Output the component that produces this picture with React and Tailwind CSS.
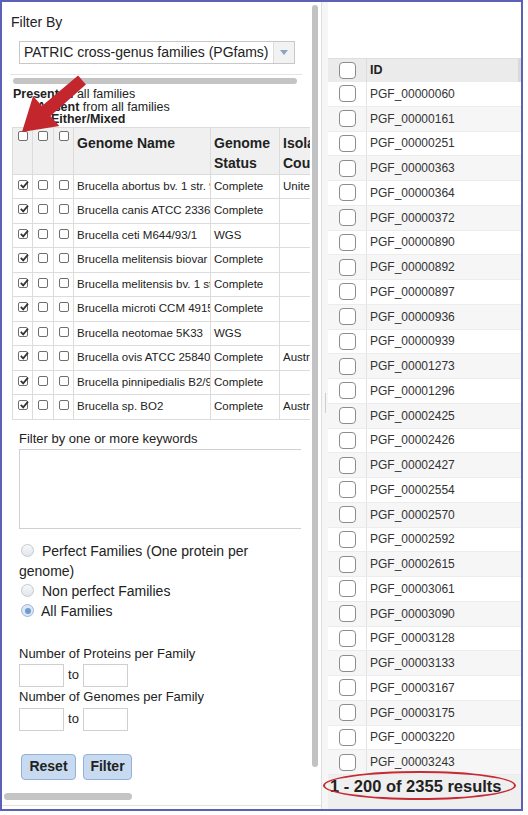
import React from 'react';

const genomes = [
  ['Brucella abortus bv. 1 str. 9-941', 'Complete', 'United States'],
  ['Brucella canis ATCC 23365', 'Complete', ''],
  ['Brucella ceti M644/93/1', 'WGS', ''],
  ['Brucella melitensis biovar Abortus 2308', 'Complete', ''],
  ['Brucella melitensis bv. 1 str. 16M', 'Complete', ''],
  ['Brucella microti CCM 4915', 'Complete', ''],
  ['Brucella neotomae 5K33', 'WGS', ''],
  ['Brucella ovis ATCC 25840', 'Complete', 'Australia'],
  ['Brucella pinnipedialis B2/94', 'Complete', ''],
  ['Brucella sp. BO2', 'Complete', 'Australia'],
];

const families = [
  '00000060', '00000161', '00000251', '00000363', '00000364', '00000372', '00000890',
  '00000892', '00000897', '00000936', '00000939', '00001273', '00001296', '00002425',
  '00002426', '00002427', '00002554', '00002570', '00002592', '00002615', '00003061',
  '00003090', '00003128', '00003133', '00003167', '00003175', '00003220', '00003243',
];

function TinyBox({ checked }) {
  return (
    <span className="relative inline-block w-[10px] h-[10px] border border-[#6f6f6f] rounded-[2px] bg-white align-top">
      {checked && (
        <svg viewBox="0 0 10 10" className="absolute left-[0px] top-[-1px] w-[10px] h-[10px]">
          <path d="M1.8 4.8 L4.2 7.4 L9 1.6" stroke="#333" strokeWidth="1.7" fill="none" />
        </svg>
      )}
    </span>
  );
}

function Radio({ on }) {
  return (
    <span
      className={`inline-flex items-center justify-center w-[13px] h-[13px] rounded-full border ${
        on ? 'border-[#9db6d6] bg-[#dbe7f4]' : 'border-[#c3c9d2] bg-gradient-to-b from-[#f7f8fa] to-[#e1e5ea]'
      }`}
    >
      {on && <span className="w-[6px] h-[6px] rounded-full bg-[#6f9ccf]" />}
    </span>
  );
}

function RowBox() {
  return <span className="block w-[17px] h-[17px] border-[1.5px] border-[#8c8c8c] rounded-[4px] bg-white" />;
}

export default function App() {
  return (
    <div className="relative w-[528px] h-[815px] bg-white overflow-hidden text-[#222]" style={{ fontFamily: '"Liberation Sans", Arial, sans-serif' }}>
      {/* frame */}
      <div className="w-[523px] h-[811px] border-2 border-[#5c60b6] flex">
        {/* left panel */}
        <div className="w-[320px] flex flex-col border-r border-[#dedede]">
          <div className="flex h-[783px]">
            <div className="w-[309px] overflow-hidden">
              <div className="pl-[9px] mt-[12px] text-[14px] leading-[16px]">Filter By</div>

              <div className="ml-[17px] mt-[11px] w-[276px] h-[23px] border border-[#c8c8c8] flex items-center">
                <span className="flex-1 pl-[4px] text-[14px] whitespace-nowrap">PATRIC cross-genus families (PGfams)</span>
                <span className="w-[21px] h-full border-l border-[#dcdcdc] bg-[#f2f2f2] flex items-center justify-center">
                  <svg viewBox="0 0 8 5" className="w-[8px] h-[5px]">
                    <path d="M0 0 L8 0 L4 5 Z" fill="#8aa4c6" />
                  </svg>
                </span>
              </div>

              <div className="ml-[8px] mt-[10px] w-[292px] h-px bg-[#e4e4e4]" />
              <div className="ml-[11px] mt-[3px] w-[284px] h-[6px] rounded-full bg-[#c4c4c4]" />

              <div className="mt-[4px] pl-[11px] text-[12.5px] leading-[12.5px] whitespace-nowrap">
                <div><b>Present in</b> all families</div>
                <div className="pl-[24px]"><b>Absent</b> from all families</div>
                <div className="pl-[38px]"><b>Either/Mixed</b></div>
              </div>

              <table className="mt-[1px] ml-[10px] table-fixed border-collapse w-[330px]">
                <colgroup>
                  <col className="w-[20px]" />
                  <col className="w-[21px]" />
                  <col className="w-[20px]" />
                  <col className="w-[137px]" />
                  <col className="w-[69px]" />
                  <col className="w-[63px]" />
                </colgroup>
                <thead>
                  <tr className="h-[47px] bg-[#f0f0f0] align-top">
                    <th className="border border-[#dcdcdc] pt-[3px] text-center"><TinyBox /></th>
                    <th className="border border-[#dcdcdc] pt-[3px] text-center"><TinyBox /></th>
                    <th className="border border-[#dcdcdc] pt-[3px] text-center"><TinyBox /></th>
                    <th className="border border-[#dcdcdc] pt-[5px] pl-[3px] text-left text-[14px] leading-[20px] font-bold whitespace-nowrap">Genome Name</th>
                    <th className="border border-[#dcdcdc] pt-[5px] pl-[3px] text-left text-[14px] leading-[20px] font-bold">Genome<br />Status</th>
                    <th className="border border-[#dcdcdc] pt-[5px] pl-[3px] text-left text-[14px] leading-[20px] font-bold whitespace-nowrap overflow-hidden">Isolation<br />Country</th>
                  </tr>
                </thead>
                <tbody>
                  {genomes.map((g) => (
                    <tr key={g[0]} className="h-[24.5px] text-[11.5px] bg-white">
                      <td className="border border-[#dcdcdc] text-center align-top pt-[5px]"><TinyBox checked /></td>
                      <td className="border border-[#dcdcdc] text-center align-top pt-[5px]"><TinyBox /></td>
                      <td className="border border-[#dcdcdc] text-center align-top pt-[5px]"><TinyBox /></td>
                      <td className="border border-[#dcdcdc] pl-[3px] whitespace-nowrap overflow-hidden">{g[0]}</td>
                      <td className="border border-[#dcdcdc] pl-[3px] whitespace-nowrap overflow-hidden">{g[1]}</td>
                      <td className="border border-[#dcdcdc] pl-[3px] whitespace-nowrap overflow-hidden">{g[2]}</td>
                    </tr>
                  ))}
                </tbody>
              </table>

              <div className="ml-[17px] mt-[11px] text-[13px] leading-[16px]">Filter by one or more keywords</div>
              <div className="ml-[17px] mt-[2px] w-[282px] h-[80px] border-[1.5px] border-r-0 border-[#cdd2d9]" />

              <div className="ml-[17px] mt-[12px] text-[14px] leading-[20px]">
                <div className="flex items-center gap-[8px] pl-[2px]"><Radio /><span>Perfect Families (One protein per</span></div>
                <div>genome)</div>
                <div className="flex items-center gap-[8px] pl-[2px]"><Radio /><span>Non perfect Families</span></div>
                <div className="flex items-center gap-[7px] pl-[2px]"><Radio on /><span>All Families</span></div>
              </div>

              <div className="ml-[17px] mt-[25px] text-[13px] leading-[16px]">Number of Proteins per Family</div>
              <div className="ml-[17px] mt-[2px] flex items-center text-[13px]">
                <span className="w-[45px] h-[23px] border-[1.5px] border-[#cfcfcf]" />
                <span className="w-[19px] text-center">to</span>
                <span className="w-[45px] h-[23px] border-[1.5px] border-[#cfcfcf]" />
              </div>
              <div className="ml-[17px] mt-[2px] text-[13px] leading-[16px]">Number of Genomes per Family</div>
              <div className="ml-[17px] mt-[3px] flex items-center text-[13px]">
                <span className="w-[45px] h-[23px] border-[1.5px] border-[#cfcfcf]" />
                <span className="w-[19px] text-center">to</span>
                <span className="w-[45px] h-[23px] border-[1.5px] border-[#cfcfcf]" />
              </div>

              <div className="ml-[19px] mt-[23px] flex gap-[7px]">
                <button className="w-[55px] h-[26px] rounded-[4px] border border-[#93b1d6] bg-[#c7daf0] text-[14px] font-bold text-[#222]">Reset</button>
                <button className="w-[49px] h-[26px] rounded-[4px] border border-[#93b1d6] bg-[#c7daf0] text-[14px] font-bold text-[#222]">Filter</button>
              </div>
            </div>
            <div className="w-[11px] pt-[3px]">
              <div className="ml-[2px] w-[6px] h-[762px] rounded-full bg-[#c2c2c2]" />
            </div>
          </div>
          <div className="flex-1 pt-[8px]">
            <div className="ml-[2px] w-[128px] h-[7px] rounded-full bg-[#c4c4c4]" />
            <div className="mt-[5px] h-px bg-[#e2e2e2]" />
          </div>
        </div>

        {/* splitter */}
        <div className="w-[6px] bg-[#f6f6f6] flex flex-col items-center justify-center">
          <div className="w-px h-[20px] bg-[#c9cbd6] mt-[-6px]" />
        </div>

        {/* right panel */}
        <div className="flex-1 flex flex-col">
          <div className="h-[56px]" />
          <div className="h-[24px] bg-[#ebebeb] border-t border-[#dedede] flex items-center">
            <div className="w-[39px] h-full flex items-center pl-[11px] border-r border-[#dcdcdc]">
              <RowBox />
            </div>
            <div className="flex-1 pl-[3px] text-[12.5px] font-bold">ID</div>
            <div className="w-[3px] h-full bg-[#dadada]" />
          </div>
          <div className="flex-1 overflow-hidden">
            {families.map((f, i) => (
              <div key={f} className={`h-[24.75px] flex items-center border-b border-[#ececec] ${i % 2 ? 'bg-[#f6f6f6]' : 'bg-white'}`}>
                <div className="w-[39px] h-full flex items-center pl-[11px] border-r border-[#e3e3e3]">
                  <RowBox />
                </div>
                <div className="pl-[3px] text-[12px] text-[#333]">PGF_{f}</div>
              </div>
            ))}
          </div>
          <div className="h-[34px] bg-[#efefef] pt-[1px] pl-[2px] text-[16.5px] leading-[20px] font-bold whitespace-nowrap">1 - 200 of 2355 results</div>
        </div>
      </div>

      {/* annotations */}
      <svg className="absolute left-0 top-0 w-[120px] h-[140px]" viewBox="0 0 120 140">
        <polygon points="22,132 59.3,126.1 50.5,115.9 85.9,84.5 78.1,75.5 41.9,106.1 33.1,95.9" fill="#c4262e" />
      </svg>
      <div className="absolute left-[323px] top-[771px] w-[193px] h-[29px] border-2 border-[#c62a32] rounded-[50%]" />
    </div>
  );
}
